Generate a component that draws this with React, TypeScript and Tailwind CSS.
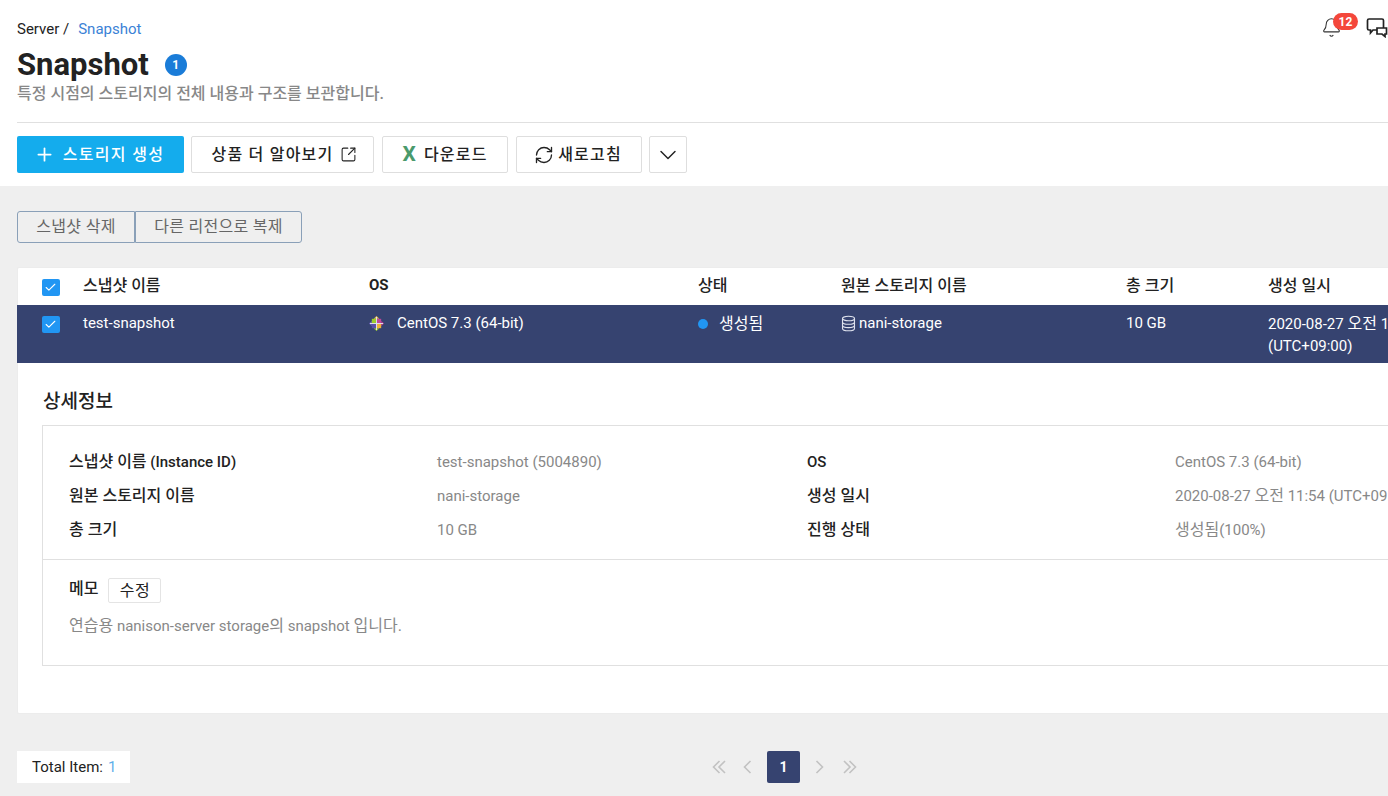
import { Bell, Check, ChevronDown, Plus, RefreshCw, SquareArrowOutUpRight } from "lucide-react";

const font = "font-['Roboto','Noto_Sans_CJK_KR',sans-serif]";

// korean text runs a little larger than the latin text around it
function K({ children }: { children: React.ReactNode }) {
  return <span className="text-[16px] leading-[20px]">{children}</span>;
}

function Checkbox() {
  return (
    <span className="flex h-[17px] w-[18px] items-center justify-center rounded-[2px] bg-[#2196f3]">
      <Check size={13} strokeWidth={2} className="text-white" />
    </span>
  );
}

function ToolButton({ width, children }: { width: string; children: React.ReactNode }) {
  return (
    <button className={`flex h-[37px] items-center justify-center rounded-[2px] border border-[#dedede] bg-white text-[16px] font-medium tracking-[1.2px] text-[#222] ${width}`}>
      {children}
    </button>
  );
}

function CentOSLogo() {
  return (
    <svg width="15" height="15" viewBox="0 0 16 16">
      <path d="M8 0l3 3H5z" fill="#efc24a" />
      <path d="M16 8l-3 3V5z" fill="#b03a8f" />
      <path d="M8 16l-3-3h6z" fill="#9ccd2a" />
      <path d="M0 8l3-3v6z" fill="#6a5fb8" />
      <path d="M3 3h4.5v4.5H3z" fill="#9ccd2a" />
      <path d="M8.5 3H13v4.5H8.5z" fill="#c0489a" />
      <path d="M8.5 8.5H13V13H8.5z" fill="#efb03a" />
      <path d="M3 8.5h4.5V13H3z" fill="#5a4fa8" />
      <path d="M8 1v14M1 8h14" stroke="#e8e8f0" strokeWidth="1" />
    </svg>
  );
}

function StorageIcon() {
  return (
    <svg width="15" height="17" viewBox="0 0 15 17" fill="none" stroke="#dfe3ee" strokeWidth="1.1" className="shrink-0">
      <ellipse cx="7.5" cy="3.5" rx="6" ry="2.3" />
      <path d="M1.5 3.5v10c0 1.3 2.7 2.3 6 2.3s6-1 6-2.3v-10" />
      <path d="M1.5 7c0 1.3 2.7 2.3 6 2.3s6-1 6-2.3" />
      <path d="M1.5 10.3c0 1.3 2.7 2.3 6 2.3s6-1 6-2.3" />
    </svg>
  );
}

function Chevrons({ dir, double }: { dir: "left" | "right"; double?: boolean }) {
  const flip = dir === "right" ? "scale(-1 1) translate(-14 0)" : undefined;
  return (
    <svg width={double ? 14 : 9} height="14" viewBox={double ? "0 0 14 14" : "0 0 9 14"} fill="none" stroke="#c2c2c2" strokeWidth="1.6">
      <g transform={double ? flip : dir === "right" ? "scale(-1 1) translate(-9 0)" : undefined}>
        <path d="M7.5 1L1.5 7l6 6" />
        {double && <path d="M13 1L7 7l6 6" />}
      </g>
    </svg>
  );
}

function InfoRow({ a, b, c, d }: { a: React.ReactNode; b: React.ReactNode; c: React.ReactNode; d: React.ReactNode }) {
  return (
    <div className="flex h-[34px] items-center text-[15px]">
      <div className="w-[368px] font-medium text-[#222]">{a}</div>
      <div className="w-[370px] text-[#888]">{b}</div>
      <div className="w-[368px] font-medium text-[#222]">{c}</div>
      <div className="whitespace-nowrap text-[#888]">{d}</div>
    </div>
  );
}

export default function App() {
  return (
    <div className={`${font} h-[796px] w-[1388px] overflow-hidden bg-[#efefef] text-[#222]`}>
      <header className="relative h-[186px] bg-white pl-[17px] pt-[20px]">
        <div className="flex h-[18px] items-center text-[15px]">
          <span>Server /</span>
          <span className="ml-[9px] text-[#3b82d6]">Snapshot</span>
        </div>
        <div className="mt-[9px] flex h-[36px] items-center">
          <h1 className="text-[31px] font-bold leading-[36px] text-[#222]">Snapshot</h1>
          <span className="ml-[16px] flex h-[22px] w-[22px] items-center justify-center rounded-full bg-[#1a7cd8] text-xs font-bold text-white">1</span>
        </div>
        <p className="mt-[1px] h-[20px] text-[16px] font-medium leading-[20px] text-[#888]">특정 시점의 스토리지의 전체 내용과 구조를 보관합니다.</p>
        <div className="mt-[18px] h-px w-full bg-[#e0e0e0]" />
        <div className="mt-[13px] flex gap-[8px]">
          <button className="mr-[-1px] flex h-[37px] w-[167px] items-center justify-center gap-[8px] rounded-[2px] bg-[#14aced] pr-[3px] text-[16px] font-medium tracking-[1.3px] text-white">
            <Plus size={21} strokeWidth={2} />
            스토리지 생성
          </button>
          <ToolButton width="w-[183px] pl-[4px]">
            상품 더 알아보기
            <SquareArrowOutUpRight size={17} strokeWidth={1.5} className="ml-[7px]" />
          </ToolButton>
          <ToolButton width="w-[126px]">
            <span className="mr-[7px] text-[21px] font-bold leading-none text-[#4a9a6c]">X</span>
            다운로드
          </ToolButton>
          <ToolButton width="w-[126px] pr-[2px]">
            <RefreshCw size={20} strokeWidth={1.6} className="mr-[4px]" />
            새로고침
          </ToolButton>
          <ToolButton width="ml-[-1px] w-[38px]">
            <ChevronDown size={28} strokeWidth={1.25} />
          </ToolButton>
        </div>
        <div className="absolute left-[1321px] top-[17px]">
          <Bell size={21} strokeWidth={1.2} className="text-[#333]" />
          <span className="absolute left-[12px] top-[-4px] flex h-[17px] w-[25px] items-center justify-center rounded-full bg-[#f4473b] text-xs font-bold text-white">12</span>
        </div>
        <svg className="absolute left-[1366px] top-[17px]" width="22" height="21" viewBox="0 0 22 21" fill="none" stroke="#222" strokeWidth="1.7">
          <path d="M3 2h13a1.5 1.5 0 0 1 1.5 1.5V13H7l-2.5 3v-3H3a1.5 1.5 0 0 1-1.5-1.5v-8A1.5 1.5 0 0 1 3 2z" />
          <path d="M11 11h9.5v6H19v2.5L16 17h-5z" fill="#fff" />
        </svg>
      </header>

      <main className="px-[17px]">
        <div className="flex pt-[25px]">
          <button className="h-[32px] w-[118px] rounded-l-[3px] border border-[#8aa0b8] text-[16px] tracking-[0.3px] text-[#666]">스냅샷 삭제</button>
          <button className="h-[32px] w-[167px] rounded-r-[3px] border border-[#8aa0b8] text-[16px] tracking-[0.3px] text-[#666]">다른 리전으로 복제</button>
        </div>

        <section className="mt-[24px] h-[447px] w-[1500px] rounded-[2px] border border-[#ececec] bg-white">
          <div className="ml-[-1px] mt-[-1px] flex h-[38px] items-center text-[15px] font-medium">
            <div className="flex w-[66px] justify-center pl-[1px] pt-[2px]"><Checkbox /></div>
            <div className="w-[286px]"><K>스냅샷 이름</K></div>
            <div className="w-[329px] pb-[2px] font-bold">OS</div>
            <div className="w-[143px]"><K>상태</K></div>
            <div className="w-[285px]"><K>원본 스토리지 이름</K></div>
            <div className="w-[142px]"><K>총 크기</K></div>
            <div><K>생성 일시</K></div>
          </div>
          <div className="ml-[-1px] flex h-[58px] items-start bg-[#364370] pt-[9px] text-[15px] leading-[19px] text-white">
            <div className="flex w-[66px] justify-center pl-[1px] pt-[2px]"><Checkbox /></div>
            <div className="w-[286px]">test-snapshot</div>
            <div className="flex w-[329px] items-center gap-[13px]">
              <CentOSLogo />
              CentOS 7.3 (64-bit)
            </div>
            <div className="flex w-[143px] items-center gap-[11px]">
              <span className="h-[10px] w-[10px] rounded-full bg-[#2196f3]" />
              <K>생성됨</K>
            </div>
            <div className="flex h-[19px] w-[285px] items-center gap-[3px]">
              <StorageIcon />
              <span>nani-storage</span>
            </div>
            <div className="w-[142px]">10 GB</div>
            <div className="mt-[-1px] whitespace-nowrap leading-[22px]">
              2020-08-27 <K>오전</K> 11:54
              <br />
              (UTC+09:00)
            </div>
          </div>

          <div className="pl-[25px] pt-[27px]">
            <h2 className="h-[24px] text-[19px] font-medium leading-[24px]">상세정보</h2>
            <div className="ml-[-1px] mt-[11px] w-[1400px] border border-[#e0e0e0]">
              <div className="px-[26px] pb-[11.5px] pt-[19px]">
                <InfoRow a={<><K>스냅샷 이름</K> (Instance ID)</>} b="test-snapshot (5004890)" c="OS" d="CentOS 7.3 (64-bit)" />
                <InfoRow a={<K>원본 스토리지 이름</K>} b="nani-storage" c={<K>생성 일시</K>} d={<>2020-08-27 <K>오전</K> 11:54 (UTC+09:00)</>} />
                <InfoRow a={<K>총 크기</K>} b="10 GB" c={<K>진행 상태</K>} d={<><K>생성됨</K>(100%)</>} />
              </div>
              <div className="h-[106px] border-t border-[#e0e0e0] px-[26px] pt-[18px]">
                <div className="flex items-center">
                  <span className="mt-[-3px] font-medium"><K>메모</K></span>
                  <button className="ml-[10px] h-[25px] w-[53px] rounded-[2px] border border-[#e4e4e4] text-[16px] tracking-[0.4px]">수정</button>
                </div>
                <p className="mt-[12px] text-[15px] text-[#888]">
                  <K>연습용</K> nanison-server storage<K>의</K> snapshot <K>입니다.</K>
                </p>
              </div>
            </div>
          </div>
        </section>

        <div className="relative mt-[37px] flex h-[32px] items-center">
          <div className="flex h-[32px] w-[113px] items-center bg-white pl-[15px] text-[15px]">
            Total Item:<span className="ml-[5px] text-[#5fb0ea]">1</span>
          </div>
          <div className="absolute left-[695px] top-0 flex h-[32px] items-center">
            <Chevrons dir="left" double />
            <span className="ml-[17px]"><Chevrons dir="left" /></span>
            <span className="ml-[15px] flex h-[32px] w-[33px] items-center justify-center rounded-[2px] bg-[#364370] text-sm font-bold text-white">1</span>
            <span className="ml-[15px]"><Chevrons dir="right" /></span>
            <span className="ml-[19px]"><Chevrons dir="right" double /></span>
          </div>
        </div>
      </main>
    </div>
  );
}
